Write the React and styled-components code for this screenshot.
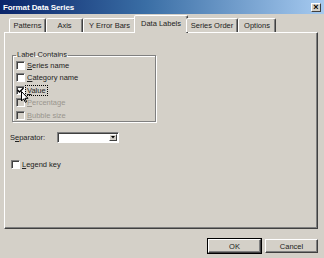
import React from 'react';
import styled, { createGlobalStyle } from 'styled-components';

const GlobalStyle = createGlobalStyle`
  html, body {
    margin: 0;
    padding: 0;
    background: #d4d0c8;
  }
  body {
    font-family: "Liberation Sans", Arial, sans-serif;
    font-size: 7.5px;
    color: #000;
  }
`;

const Window = styled.div`
  width: 324px;
  height: 258px;
  background: #d4d0c8;
  display: flex;
  flex-direction: column;
  overflow: hidden;
  position: relative;
`;

const TitleBar = styled.div`
  height: 14px;
  flex: none;
  display: flex;
  align-items: center;
  justify-content: space-between;
  padding: 0 3px 0 3px;
  background: linear-gradient(90deg, #0a246a 0%, #3a6ea5 45%, #a6caf0 100%);
`;

const Title = styled.span`
  color: #fff;
  font-weight: bold;
  font-size: 8px;
  letter-spacing: -0.1px;
`;

const CloseButton = styled.div`
  width: 10px;
  height: 9px;
  box-sizing: border-box;
  background: #d4d0c8;
  border: 1px solid;
  border-color: #fff #404040 #404040 #fff;
  display: flex;
  align-items: center;
  justify-content: center;
  font-weight: bold;
  font-size: 9px;
  line-height: 1;
  margin-top: 1px;
`;

const Body = styled.div`
  flex: 1;
  display: flex;
  flex-direction: column;
  padding: 1px 6px 0 4px;
`;

const TabStrip = styled.div`
  display: flex;
  align-items: flex-end;
  height: 17px;
  padding-left: 5px;
  position: relative;
  z-index: 1;
`;

const Tab = styled.div`
  box-sizing: border-box;
  width: ${({ w }) => w}px;
  height: ${({ active }) => (active ? 18 : 14)}px;
  margin-bottom: ${({ active }) => (active ? -1 : 0)}px;
  margin-left: ${({ active }) => (active ? -2 : 0)}px;
  margin-right: ${({ active }) => (active ? -2 : 0)}px;
  border: 1px solid;
  border-bottom: none;
  border-color: #fff #404040 transparent #fff;
  border-radius: 2px 2px 0 0;
  box-shadow: inset -1px 0 #808080;
  background: #d4d0c8;
  display: flex;
  align-items: center;
  justify-content: center;
  padding-bottom: ${({ active }) => (active ? 3 : 0)}px;
  color: #222;
  white-space: nowrap;
`;

const Panel = styled.div`
  height: 197px;
  box-sizing: border-box;
  border: 1px solid;
  border-color: #fff #404040 #404040 #fff;
  box-shadow: inset -1px -1px #808080;
  position: relative;
  display: flex;
  flex-direction: column;
  padding: 0 0 0 5px;
`;

const GroupBox = styled.fieldset`
  width: 144px;
  height: 72px;
  box-sizing: border-box;
  margin: 17px 0 0 2px;
  padding: 0 0 0 3px;
  border: 1px solid #808080;
  box-shadow: 1px 1px 0 #fff, inset 1px 1px 0 #fff;
  display: flex;
  flex-direction: column;
`;

const GroupLegend = styled.legend`
  padding: 0 1px;
  margin: 0 0 -1px 0;
  line-height: 10px;
  color: #222;
`;

const CheckRow = styled.label`
  display: flex;
  align-items: center;
  gap: 1px;
  height: 12.5px;
  flex: none;
  color: ${({ disabled }) => (disabled ? '#9a968e' : '#222')};
`;

const Box = styled.span`
  width: 9px;
  height: 9px;
  box-sizing: border-box;
  flex: none;
  border: 1px solid;
  border-color: #808080 #fff #fff #808080;
  box-shadow: inset 1px 1px #404040;
  background: ${({ disabled }) => (disabled ? '#d4d0c8' : '#fff')};
  display: flex;
  align-items: center;
  justify-content: center;
`;

const Text = styled.span`
  padding: 0 1px;
  outline: ${({ focused }) => (focused ? '1px dotted #000' : 'none')};
  line-height: 9px;
  u {
    text-decoration: underline;
  }
`;

const SeparatorRow = styled.div`
  display: flex;
  align-items: center;
  margin-top: 10px;
  height: 11px;
`;

const SepLabel = styled.span`
  width: 47px;
  color: #222;
`;

const Combo = styled.div`
  width: 62px;
  height: 11px;
  box-sizing: border-box;
  border: 1px solid;
  border-color: #808080 #fff #fff #808080;
  box-shadow: inset 1px 1px #404040;
  background: #fff;
  display: flex;
  justify-content: flex-end;
  padding: 1px;
`;

const ComboArrow = styled.div`
  width: 8px;
  height: 100%;
  box-sizing: border-box;
  background: #d4d0c8;
  border: 1px solid;
  border-color: #fff #404040 #404040 #fff;
  display: flex;
  align-items: center;
  justify-content: center;
`;

const LegendRow = styled(CheckRow)`
  margin-top: 15px;
  margin-left: 1px;
`;

const Cursor = styled.svg`
  position: absolute;
  left: 16px;
  top: 58px;
`;

const ButtonRow = styled.div`
  display: flex;
  justify-content: flex-end;
  gap: 4px;
  margin-top: 10px;
`;

const Button = styled.button`
  width: 53px;
  height: 14px;
  box-sizing: border-box;
  padding: 0;
  font: inherit;
  color: #222;
  background: #d4d0c8;
  border: 1px solid;
  border-color: #fff #404040 #404040 #fff;
  box-shadow: inset -1px -1px #808080;
  outline: ${({ primary }) => (primary ? '1px solid #000' : 'none')};
`;

const Check = () => (
  <svg width="7" height="7" viewBox="0 0 7 7">
    <path d="M0.5 3 L2.5 5 L6.5 1" fill="none" stroke="#000" strokeWidth="1.4" />
  </svg>
);

const tabs = [
  { label: 'Patterns', w: 37 },
  { label: 'Axis', w: 37 },
  { label: 'Y Error Bars', w: 53 },
  { label: 'Data Labels', w: 54, active: true },
  { label: 'Series Order', w: 52 },
  { label: 'Options', w: 38 },
];

const options = [
  { key: 'S', rest: 'eries name' },
  { key: 'C', rest: 'ategory name' },
  { key: 'V', rest: 'alue', checked: true, focused: true },
  { key: 'P', rest: 'ercentage', disabled: true },
  { key: 'B', rest: 'ubble size', disabled: true },
];

export default function App() {
  return (
    <Window>
      <GlobalStyle />
      <TitleBar>
        <Title>Format Data Series</Title>
        <CloseButton>×</CloseButton>
      </TitleBar>
      <Body>
        <TabStrip>
          {tabs.map((t) => (
            <Tab key={t.label} w={t.w} active={t.active}>
              {t.label}
            </Tab>
          ))}
        </TabStrip>
        <Panel>
          <GroupBox>
            <GroupLegend>Label Contains</GroupLegend>
            {options.map((o) => (
              <CheckRow key={o.key} disabled={o.disabled}>
                <Box disabled={o.disabled}>{o.checked && <Check />}</Box>
                <Text focused={o.focused}>
                  <u>{o.key}</u>
                  {o.rest}
                </Text>
              </CheckRow>
            ))}
          </GroupBox>
          <SeparatorRow>
            <SepLabel>
              S<u>e</u>parator:
            </SepLabel>
            <Combo>
              <ComboArrow>
                <svg width="4" height="3" viewBox="0 0 4 3">
                  <path d="M0 0 H4 L2 2.5 Z" fill="#000" />
                </svg>
              </ComboArrow>
            </Combo>
          </SeparatorRow>
          <LegendRow>
            <Box />
            <Text>
              <u>L</u>egend key
            </Text>
          </LegendRow>
          <Cursor width="8" height="12" viewBox="0 0 8 12">
            <path d="M0.5 0.5 V10 L2.7 7.8 L4.3 11.3 L5.6 10.7 L4 7.3 H7 Z" fill="#fff" stroke="#000" strokeWidth="1" />
          </Cursor>
        </Panel>
        <ButtonRow>
          <Button primary>OK</Button>
          <Button>Cancel</Button>
        </ButtonRow>
      </Body>
    </Window>
  );
}
